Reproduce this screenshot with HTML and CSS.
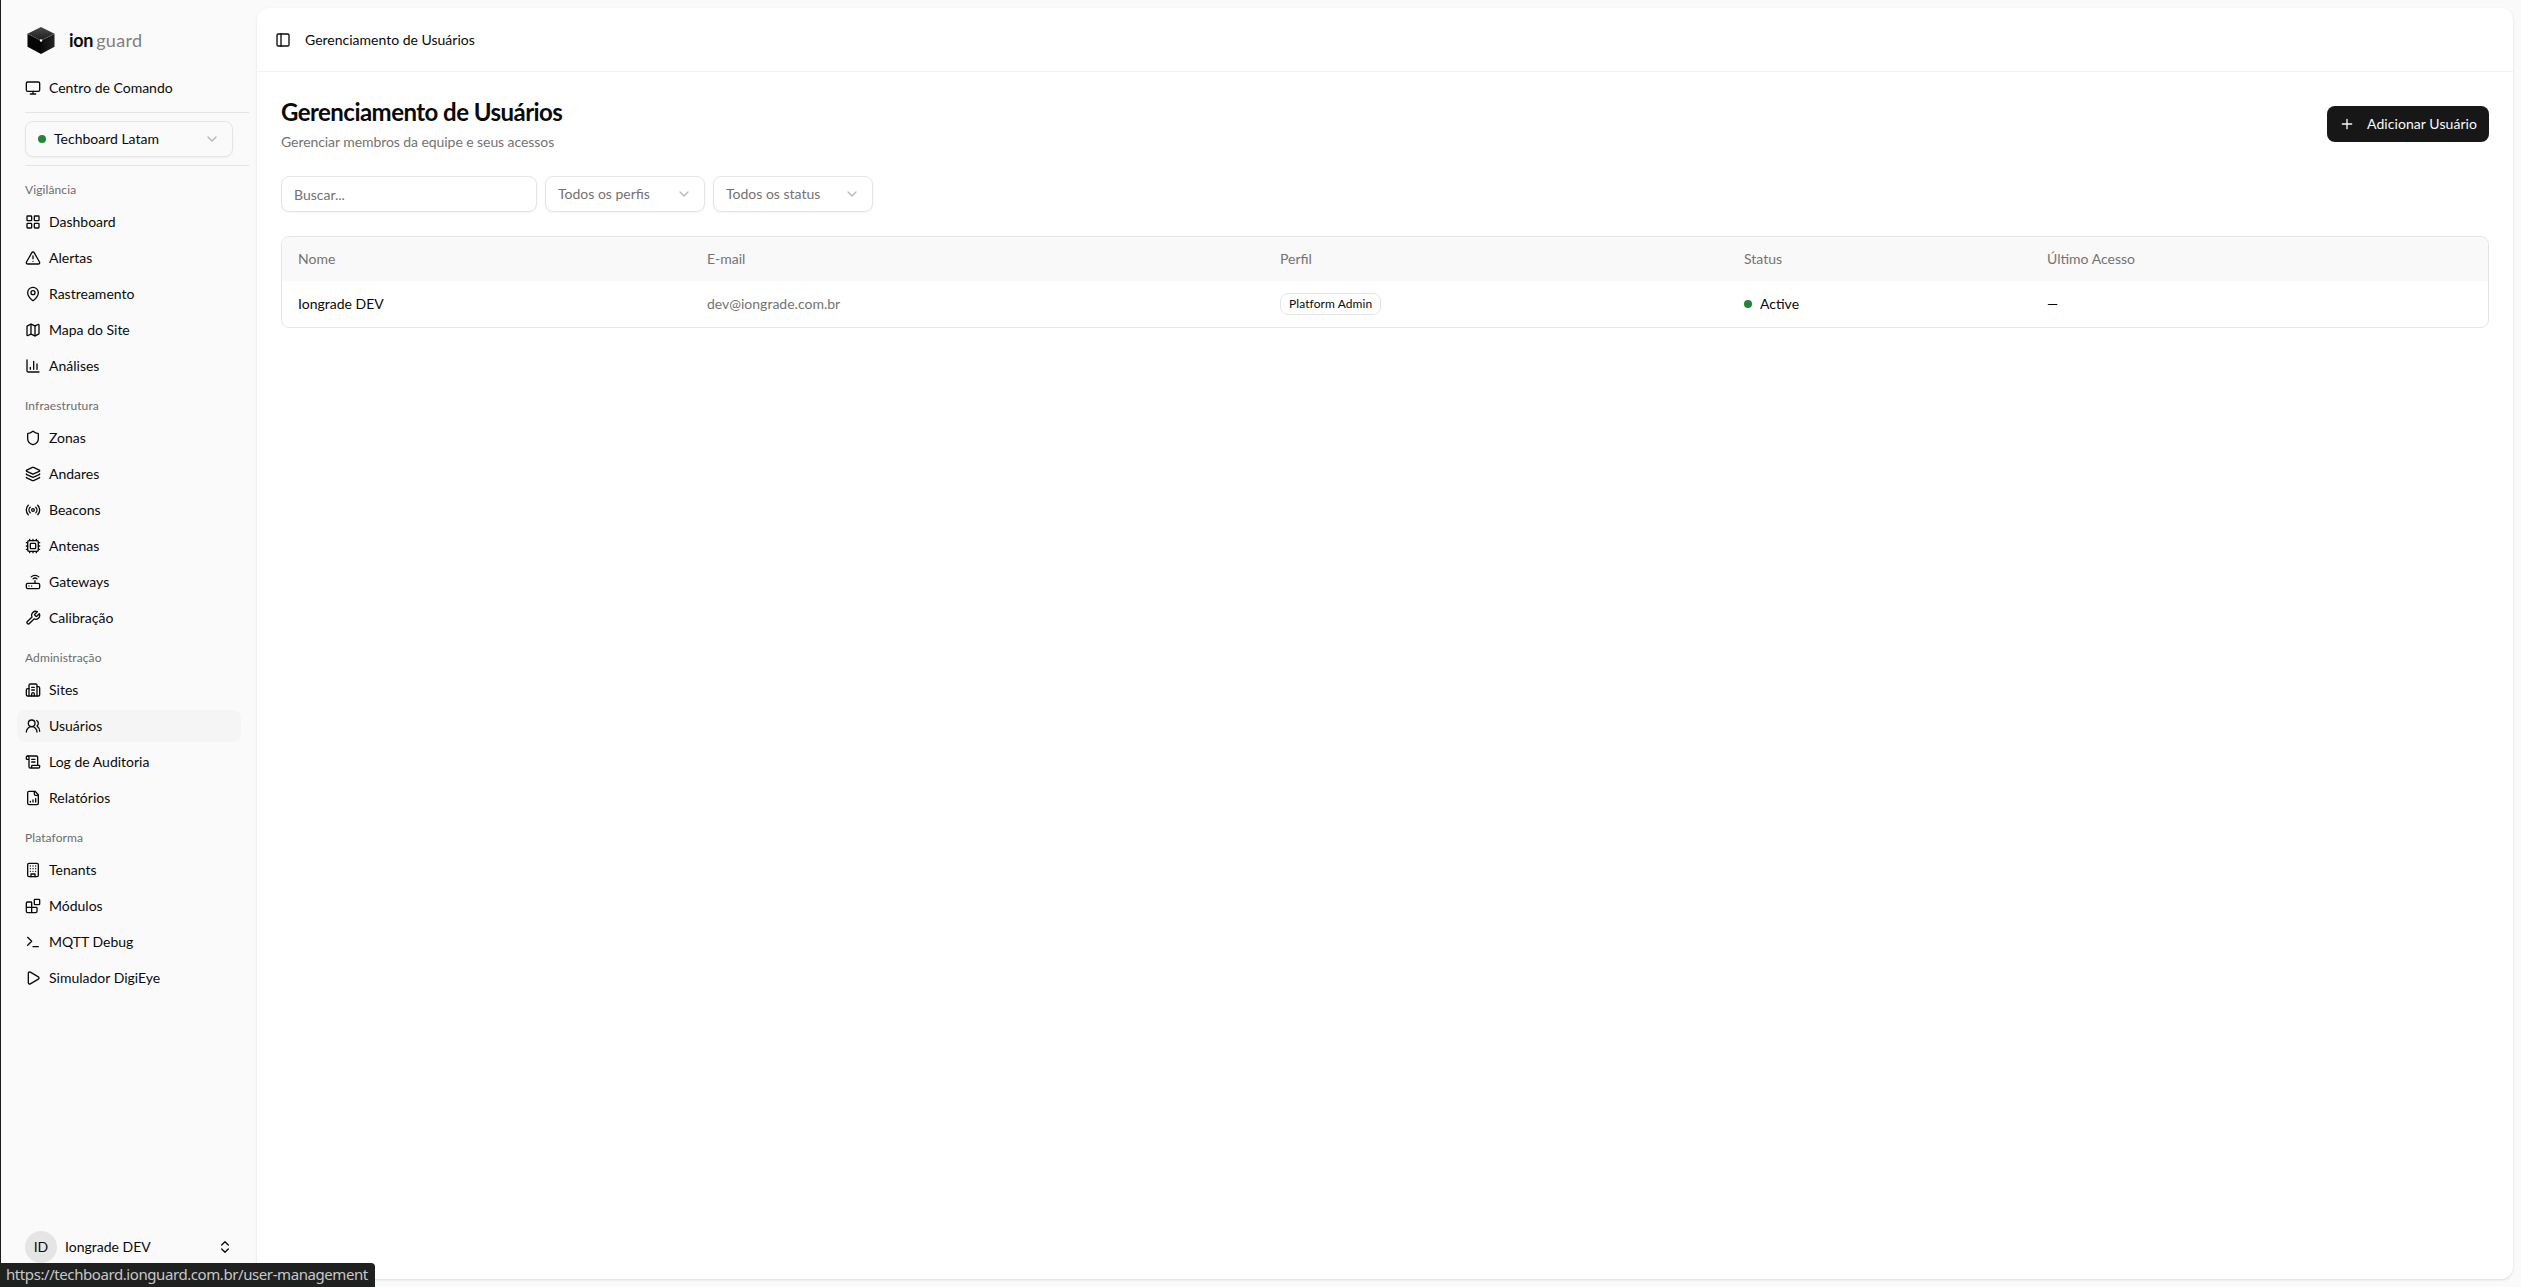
FILE: index.html
```html
<!DOCTYPE html>
<html lang="pt-BR">
<head>
  <meta charset="UTF-8">
  <meta name="viewport" content="width=device-width, initial-scale=1.0">
  <title>Gerenciamento de Usuários</title>
  <link rel="stylesheet" href="styles.css">
</head>
<body>
  <div class="app">
    <aside class="sidebar">
      <div class="brand">
        <svg class="brand-logo" viewBox="0 0 32 32">
          <defs>
            <linearGradient id="cubeTop" x1="0" y1="0" x2="0" y2="1">
              <stop offset="0" stop-color="#4a4a4a"/>
              <stop offset="1" stop-color="#1c1c1c"/>
            </linearGradient>
            <linearGradient id="cubeRight" x1="0" y1="0" x2="1" y2="0">
              <stop offset="0" stop-color="#0a0a0a"/>
              <stop offset="1" stop-color="#242424"/>
            </linearGradient>
          </defs>
          <path fill="url(#cubeTop)" d="M16 3l13.500 6.800L16 16.500 2.500 9.800z"/>
          <path fill="#050505" d="M2.500 9.800L16 16.500V30L2.500 22.800z"/>
          <path fill="url(#cubeRight)" d="M29.500 9.800L16 16.500V30l13.500-7.200z"/>
          <path fill="none" stroke="#8a8a8a" stroke-width=".6" stroke-dasharray="1 1" d="M2.500 9.800L16 16.500l13.500-6.700"/>
          <circle cx="16" cy="16.500" r="1.200" fill="#fff"/>
        </svg>
        <div class="brand-name"><strong>ion</strong><span>guard</span></div>
      </div>

      <a class="nav-item" href="#">
        <svg class="icon" viewBox="0 0 24 24"><rect width="20" height="14" x="2" y="3" rx="2"/><path d="M8 21h8M12 17v4"/></svg>
        Centro de Comando
      </a>

      <div class="site-switch">
        <button class="select site-select">
          <span class="dot"></span>
          <span class="select-label">Techboard Latam</span>
          <svg class="icon chevron" viewBox="0 0 24 24"><path d="m6 9 6 6 6-6"/></svg>
        </button>
      </div>

      <nav class="nav">
        <div class="nav-group">
          <div class="nav-title">Vigilância</div>
          <a class="nav-item" href="#">
            <svg class="icon" viewBox="0 0 24 24"><rect width="7" height="7" x="3" y="3" rx="1"/><rect width="7" height="7" x="14" y="3" rx="1"/><rect width="7" height="7" x="14" y="14" rx="1"/><rect width="7" height="7" x="3" y="14" rx="1"/></svg>
            Dashboard
          </a>
          <a class="nav-item" href="#">
            <svg class="icon" viewBox="0 0 24 24"><path d="m21.730 18-8-14a2 2 0 0 0-3.480 0l-8 14A2 2 0 0 0 4 21h16a2 2 0 0 0 1.730-3"/><path d="M12 9v4M12 17h.01"/></svg>
            Alertas
          </a>
          <a class="nav-item" href="#">
            <svg class="icon" viewBox="0 0 24 24"><path d="M20 10c0 4.993-5.539 10.193-7.399 11.799a1 1 0 0 1-1.202 0C9.539 20.193 4 14.993 4 10a8 8 0 0 1 16 0"/><circle cx="12" cy="10" r="3"/></svg>
            Rastreamento
          </a>
          <a class="nav-item" href="#">
            <svg class="icon" viewBox="0 0 24 24"><path d="M14.106 5.553a2 2 0 0 0 1.788 0l3.659-1.830A1 1 0 0 1 21 4.619v12.764a1 1 0 0 1-.553.894l-4.553 2.277a2 2 0 0 1-1.788 0l-4.212-2.106a2 2 0 0 0-1.788 0l-3.659 1.830A1 1 0 0 1 3 19.381V6.618a1 1 0 0 1 .553-.894l4.553-2.277a2 2 0 0 1 1.788 0z"/><path d="M15 5.764v15M9 3.236v15"/></svg>
            Mapa do Site
          </a>
          <a class="nav-item" href="#">
            <svg class="icon" viewBox="0 0 24 24"><path d="M3 3v16a2 2 0 0 0 2 2h16M18 17V9M13 17V5M8 17v-3"/></svg>
            Análises
          </a>
        </div>

        <div class="nav-group">
          <div class="nav-title">Infraestrutura</div>
          <a class="nav-item" href="#">
            <svg class="icon" viewBox="0 0 24 24"><path d="M20 13c0 5-3.500 7.500-7.660 8.950a1 1 0 0 1-.670-.010C7.500 20.500 4 18 4 13V6a1 1 0 0 1 1-1c2 0 4.500-1.200 6.240-2.720a1.170 1.170 0 0 1 1.520 0C14.510 3.810 17 5 19 5a1 1 0 0 1 1 1z"/></svg>
            Zonas
          </a>
          <a class="nav-item" href="#">
            <svg class="icon" viewBox="0 0 24 24"><path d="M12.830 2.180a2 2 0 0 0-1.660 0L2.600 6.080a1 1 0 0 0 0 1.830l8.580 3.910a2 2 0 0 0 1.660 0l8.580-3.900a1 1 0 0 0 0-1.830z"/><path d="M2 12a1 1 0 0 0 .580.910l8.600 3.910a2 2 0 0 0 1.650 0l8.580-3.900A1 1 0 0 0 22 12"/><path d="M2 17a1 1 0 0 0 .580.910l8.600 3.910a2 2 0 0 0 1.650 0l8.580-3.900A1 1 0 0 0 22 17"/></svg>
            Andares
          </a>
          <a class="nav-item" href="#">
            <svg class="icon" viewBox="0 0 24 24"><path d="M4.900 19.100C1 15.200 1 8.800 4.900 4.900M7.800 16.200c-2.300-2.300-2.300-6.100 0-8.500"/><circle cx="12" cy="12" r="2"/><path d="M16.200 7.800c2.300 2.300 2.300 6.100 0 8.500M19.100 4.900C23 8.800 23 15.100 19.100 19"/></svg>
            Beacons
          </a>
          <a class="nav-item" href="#">
            <svg class="icon" viewBox="0 0 24 24"><path d="M12 20v2M12 2v2M17 20v2M17 2v2M2 12h2M2 17h2M2 7h2M20 12h2M20 17h2M20 7h2M7 20v2M7 2v2"/><rect x="4" y="4" width="16" height="16" rx="2"/><rect x="8" y="8" width="8" height="8" rx="1"/></svg>
            Antenas
          </a>
          <a class="nav-item" href="#">
            <svg class="icon" viewBox="0 0 24 24"><rect width="20" height="8" x="2" y="14" rx="2"/><path d="M6.010 18H6M10.010 18H10M15 10v4M17.840 7.170a4 4 0 0 0-5.660 0M20.660 4.340a8 8 0 0 0-11.310 0"/></svg>
            Gateways
          </a>
          <a class="nav-item" href="#">
            <svg class="icon" viewBox="0 0 24 24"><path d="M14.700 6.300a1 1 0 0 0 0 1.400l1.600 1.600a1 1 0 0 0 1.400 0l3.770-3.770a6 6 0 0 1-7.940 7.940l-6.910 6.910a2.120 2.120 0 0 1-3-3l6.910-6.910a6 6 0 0 1 7.940-7.940l-3.760 3.760z"/></svg>
            Calibração
          </a>
        </div>

        <div class="nav-group">
          <div class="nav-title">Administração</div>
          <a class="nav-item" href="#">
            <svg class="icon" viewBox="0 0 24 24"><path d="M10 12h4M10 8h4M14 21v-3a2 2 0 0 0-4 0v3"/><path d="M6 10H4a2 2 0 0 0-2 2v7a2 2 0 0 0 2 2h16a2 2 0 0 0 2-2V9a2 2 0 0 0-2-2h-2"/><path d="M6 21V5a2 2 0 0 1 2-2h8a2 2 0 0 1 2 2v16"/></svg>
            Sites
          </a>
          <a class="nav-item active" href="#">
            <svg class="icon" viewBox="0 0 24 24"><path d="M18 21a8 8 0 0 0-16 0"/><circle cx="10" cy="8" r="5"/><path d="M22 20c0-3.370-2-6.500-4-8a5 5 0 0 0-.450-8.300"/></svg>
            Usuários
          </a>
          <a class="nav-item" href="#">
            <svg class="icon" viewBox="0 0 24 24"><path d="M15 12h-5M15 8h-5M19 17V5a2 2 0 0 0-2-2H4"/><path d="M8 21h12a2 2 0 0 0 2-2v-1a1 1 0 0 0-1-1H11a1 1 0 0 0-1 1v1a2 2 0 1 1-4 0V5a2 2 0 1 0-4 0v2a1 1 0 0 0 1 1h3"/></svg>
            Log de Auditoria
          </a>
          <a class="nav-item" href="#">
            <svg class="icon" viewBox="0 0 24 24"><path d="M15 2H6a2 2 0 0 0-2 2v16a2 2 0 0 0 2 2h12a2 2 0 0 0 2-2V7z"/><path d="M14 2v4a2 2 0 0 0 2 2h4M8 18v-1M12 18v-3M16 18v-5"/></svg>
            Relatórios
          </a>
        </div>

        <div class="nav-group">
          <div class="nav-title">Plataforma</div>
          <a class="nav-item" href="#">
            <svg class="icon" viewBox="0 0 24 24"><rect width="16" height="20" x="4" y="2" rx="2"/><path d="M9 22v-4h6v4M8 6h.01M16 6h.01M12 6h.01M12 10h.01M12 14h.01M16 10h.01M16 14h.01M8 10h.01M8 14h.01"/></svg>
            Tenants
          </a>
          <a class="nav-item" href="#">
            <svg class="icon" viewBox="0 0 24 24"><rect width="8" height="8" x="14" y="2" rx="1"/><path d="M10 22V7a1 1 0 0 0-1-1H4a2 2 0 0 0-2 2v12a2 2 0 0 0 2 2h12a2 2 0 0 0 2-2v-5a1 1 0 0 0-1-1H2"/></svg>
            Módulos
          </a>
          <a class="nav-item" href="#">
            <svg class="icon" viewBox="0 0 24 24"><path d="m4 17 6-6-6-6M12 19h8"/></svg>
            MQTT Debug
          </a>
          <a class="nav-item" href="#">
            <svg class="icon" viewBox="0 0 24 24"><path d="M5 5a2 2 0 0 1 3.008-1.728l11.997 6.998a2 2 0 0 1 .003 3.458l-12 7A2 2 0 0 1 5 19z"/></svg>
            Simulador DigiEye
          </a>
        </div>
      </nav>

      <div class="user">
        <span class="avatar">ID</span>
        <span class="user-name">Iongrade DEV</span>
        <svg class="icon" viewBox="0 0 24 24"><path d="m7 15 5 5 5-5M7 9l5-5 5 5"/></svg>
      </div>
    </aside>

    <main class="panel">
      <header class="topbar">
        <svg class="icon" viewBox="0 0 24 24"><rect width="18" height="18" x="3" y="3" rx="2"/><path d="M9 3v18"/></svg>
        <span>Gerenciamento de Usuários</span>
      </header>

      <section class="content">
        <div class="page-head">
          <div>
            <h1>Gerenciamento de Usuários</h1>
            <p>Gerenciar membros da equipe e seus acessos</p>
          </div>
          <button class="btn-primary">
            <svg class="icon" viewBox="0 0 24 24"><path d="M5 12h14M12 5v14"/></svg>
            Adicionar Usuário
          </button>
        </div>

        <div class="filters">
          <input class="search" type="text" placeholder="Buscar...">
          <button class="select">
            <span class="select-label">Todos os perfis</span>
            <svg class="icon chevron" viewBox="0 0 24 24"><path d="m6 9 6 6 6-6"/></svg>
          </button>
          <button class="select">
            <span class="select-label">Todos os status</span>
            <svg class="icon chevron" viewBox="0 0 24 24"><path d="m6 9 6 6 6-6"/></svg>
          </button>
        </div>

        <div class="table-wrap">
          <table>
            <colgroup>
              <col class="col-name"><col class="col-email"><col class="col-role"><col class="col-status"><col>
            </colgroup>
            <thead>
              <tr>
                <th>Nome</th>
                <th>E-mail</th>
                <th>Perfil</th>
                <th>Status</th>
                <th>Último Acesso</th>
              </tr>
            </thead>
            <tbody>
              <tr>
                <td>Iongrade DEV</td>
                <td class="muted">dev@iongrade.com.br</td>
                <td><span class="badge">Platform Admin</span></td>
                <td><div class="status"><span class="dot"></span>Active</div></td>
                <td>—</td>
              </tr>
            </tbody>
          </table>
        </div>
      </section>
    </main>
  </div>

  <div class="link-hint">https://techboard.ionguard.com.br/user-management</div>
</body>
</html>
```
FILE: styles.css
```css
:root {
  --bg: #fafafa;
  --text: #0a0a0a;
  --muted: #737373;
  --border: #e5e5e5;
  --accent: #f5f5f5;
  --primary: #171717;
  --green: #238636;
}

* {
  box-sizing: border-box;
}

body {
  margin: 0;
  font-family: Lato, "Liberation Sans", sans-serif;
  font-size: 14px;
  line-height: 20px;
  color: var(--text);
  background: var(--bg);
}

button, input {
  font: inherit;
  color: inherit;
}

.app {
  display: flex;
  height: 100vh;
  border-left: 1px solid #1c1c1c;
}

.icon {
  width: 16px;
  height: 16px;
  flex: none;
  fill: none;
  stroke: currentColor;
  stroke-width: 2;
  stroke-linecap: round;
  stroke-linejoin: round;
}

/* sidebar */
.sidebar {
  width: 256px;
  flex: none;
  display: flex;
  flex-direction: column;
  padding: 16px 8px 16px 16px;
}

.brand {
  display: flex;
  align-items: center;
  gap: 12px;
  height: 48px;
  padding: 0 8px;
  margin-bottom: 8px;
}

.brand-logo {
  width: 32px;
  height: 32px;
}

.brand-name {
  font-size: 18px;
  line-height: 28px;
  letter-spacing: -0.3px;
}

.brand-name span {
  margin-left: 3px;
  color: #808080;
  letter-spacing: 0.3px;
}

.nav-item {
  display: flex;
  align-items: center;
  gap: 8px;
  width: 224px;
  height: 32px;
  padding: 0 8px;
  border-radius: 8px;
  color: var(--text);
  text-decoration: none;
}

.nav-item:hover, .nav-item.active {
  background: var(--accent);
}

.site-switch {
  margin: 8px 0 8px 8px;
  padding: 8px 0;
  border-top: 1px solid var(--border);
  border-bottom: 1px solid var(--border);
}

.select {
  display: flex;
  align-items: center;
  gap: 8px;
  width: 160px;
  height: 36px;
  padding: 0 12px;
  border: 1px solid var(--border);
  border-radius: 8px;
  background: transparent;
  color: var(--muted);
  box-shadow: 0 1px 2px rgba(0, 0, 0, .05);
}

.select-label {
  flex: 1;
  text-align: left;
}

.site-select {
  width: 208px;
  color: var(--text);
}

.chevron {
  opacity: .5;
}

.site-select .chevron {
  color: var(--muted);
}

.dot {
  width: 8px;
  height: 8px;
  flex: none;
  border-radius: 50%;
  background: var(--green);
}

.nav {
  flex: 1;
  display: flex;
  flex-direction: column;
  gap: 8px;
}

.nav-group {
  display: flex;
  flex-direction: column;
  gap: 4px;
}

.nav-title {
  height: 32px;
  margin-bottom: -4px;
  padding: 0 8px;
  font-size: 12px;
  line-height: 32px;
  letter-spacing: 0.1px;
  color: #6c6c6c;
}

.user {
  display: flex;
  align-items: center;
  gap: 8px;
  width: 224px;
  height: 48px;
  padding: 0 8px;
}

.avatar {
  width: 32px;
  height: 32px;
  border-radius: 50%;
  background: var(--border);
  text-align: center;
  line-height: 32px;
}

.user-name {
  flex: 1;
}

/* main panel */
.panel {
  flex: 1;
  margin: 8px 8px 8px 0;
  border-radius: 12px;
  background: #fff;
  box-shadow: 0 1px 3px rgba(0, 0, 0, .1), 0 1px 2px -1px rgba(0, 0, 0, .1);
}

.topbar {
  display: flex;
  align-items: center;
  gap: 14px;
  height: 64px;
  padding: 0 18px;
  border-bottom: 1px solid #f2f2f2;
}

.content {
  padding: 24px;
}

.page-head {
  display: flex;
  align-items: center;
  justify-content: space-between;
  margin-bottom: 24px;
}

h1 {
  margin: 0 0 4px;
  font-size: 24px;
  line-height: 32px;
  letter-spacing: -0.54px;
}

.page-head p {
  margin: 0;
  letter-spacing: -0.07px;
  color: var(--muted);
}

.btn-primary {
  display: flex;
  align-items: center;
  gap: 12px;
  width: 162px;
  height: 36px;
  padding: 0 12px;
  border: none;
  border-radius: 8px;
  background: var(--primary);
  color: #fafafa;
  letter-spacing: 0.07px;
  white-space: nowrap;
  cursor: pointer;
}

.filters {
  display: flex;
  gap: 8px;
  margin-bottom: 24px;
}

.search {
  width: 256px;
  height: 36px;
  padding: 0 12px;
  border: 1px solid var(--border);
  border-radius: 8px;
  box-shadow: 0 1px 2px rgba(0, 0, 0, .05);
}

.search::placeholder {
  color: var(--muted);
}

.table-wrap {
  overflow: hidden;
  border: 1px solid var(--border);
  border-radius: 8px;
}

table {
  width: 100%;
  table-layout: fixed;
  border-collapse: collapse;
}

.col-name { width: 409px; }
.col-email { width: 573px; }
.col-role { width: 464px; }
.col-status { width: 303px; }

th, td {
  padding: 0 16px;
  text-align: left;
  font-weight: 400;
}

th {
  height: 44px;
  background: #f9f9f9;
  color: var(--muted);
}

td {
  height: 46px;
}

.muted {
  color: var(--muted);
}

.badge {
  display: inline-flex;
  align-items: center;
  height: 22px;
  padding: 0 8px;
  border: 1px solid var(--border);
  border-radius: 8px;
  font-size: 12px;
  line-height: 16px;
  letter-spacing: 0.09px;
  vertical-align: middle;
}

.status {
  display: flex;
  align-items: center;
  gap: 8px;
}

/* link address shown over the bottom left corner */
.link-hint {
  position: absolute;
  left: 0;
  bottom: 0;
  width: 375px;
  height: 24px;
  padding-left: 6px;
  border-top-right-radius: 4px;
  background: #1f2020;
  color: #c8c8c8;
  font-family: "Noto Sans", sans-serif;
  font-size: 15px;
  line-height: 23px;
  letter-spacing: -0.42px;
  white-space: nowrap;
}
```
